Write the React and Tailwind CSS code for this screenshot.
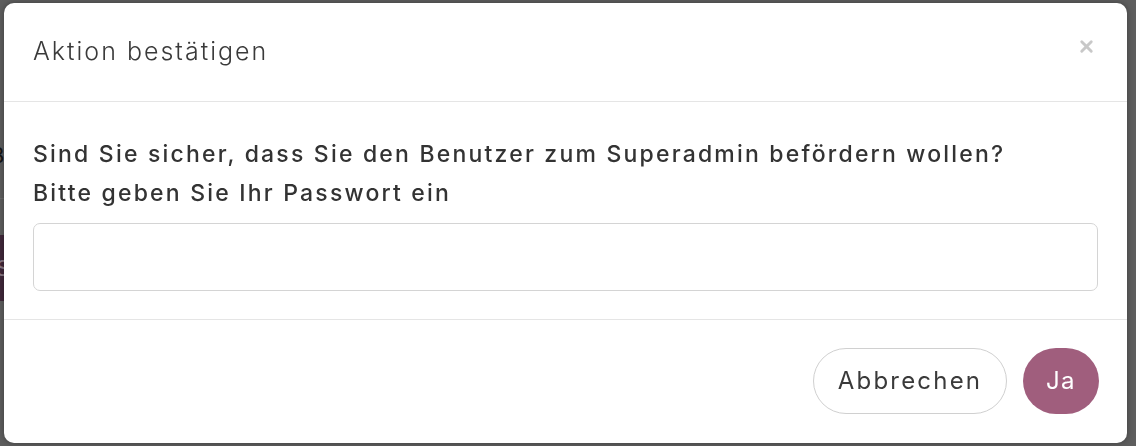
import { X } from "lucide-react";

const font = { fontFamily: 'Inter, "Open Sans", sans-serif' };

const ConfirmModal = () => {
  return (
    <div className="fixed inset-0 flex items-start justify-start pl-[4px] pt-[3px]">
      <div className="w-[1123px] h-[440px] bg-white rounded-[10px] shadow-[0_0_6px_rgba(0,0,0,0.35)] flex flex-col overflow-hidden">
        {/* header */}
        <div className="h-[99px] shrink-0 flex items-center justify-between pl-[29px] pr-[31px] border-b border-[#e5e5e5]">
          <h2 className="text-[25px] font-light text-[#3a3a3a] tracking-[2px]">Aktion bestätigen</h2>
          <button className="text-[#c8c8c8] -mt-[12px]">
            <X className="w-[19px] h-[19px]" strokeWidth={3.6} />
          </button>
        </div>

        {/* body */}
        <div className="h-[218px] shrink-0 px-[29px] pt-[33px] border-b border-[#e5e5e5]">
          <p className="text-[23px] leading-[39px] font-medium text-[#333] tracking-[2.2px] whitespace-nowrap">
            Sind Sie sicher, dass Sie den Benutzer zum Superadmin befördern wollen?
          </p>
          <p className="text-[23px] leading-[39px] font-medium text-[#333] tracking-[2.2px]">
            Bitte geben Sie Ihr Passwort ein
          </p>
          <input
            type="password"
            className="mt-[10px] w-full h-[68px] rounded-[7px] border border-[#d4d4d4] px-4 outline-none"
          />
        </div>

        {/* footer */}
        <div className="flex-1 flex items-start justify-end gap-[16px] pt-[28px] pr-[28px]">
          <button className="w-[194px] h-[66px] rounded-full border border-[#d0d0d0] bg-white text-[24px] font-normal tracking-[2.2px] text-[#3a3a3a]">
            Abbrechen
          </button>
          <button className="w-[76px] h-[66px] rounded-full bg-[#a05e7d] text-[24px] font-normal tracking-[1.5px] text-white">
            Ja
          </button>
        </div>
      </div>
    </div>
  );
};

export default function App() {
  return (
    <div className="w-[1136px] h-[446px] bg-[#5e5e5e] overflow-hidden" style={font}>
      {/* page behind the overlay */}
      <div className="flex flex-col pt-[140px] -ml-[10px]">
        <div className="h-[30px] text-[22px] leading-[30px] text-[#151515]">Be</div>
        <div className="mt-[28px] h-px bg-[#6a6a6a] w-[200px]" />
        <div className="mt-[36px] h-[66px] w-[120px] bg-[#40283a] text-[#8a7a85] text-[22px] leading-[66px] pl-[6px]">
          Se
        </div>
      </div>
      <ConfirmModal />
    </div>
  );
}
